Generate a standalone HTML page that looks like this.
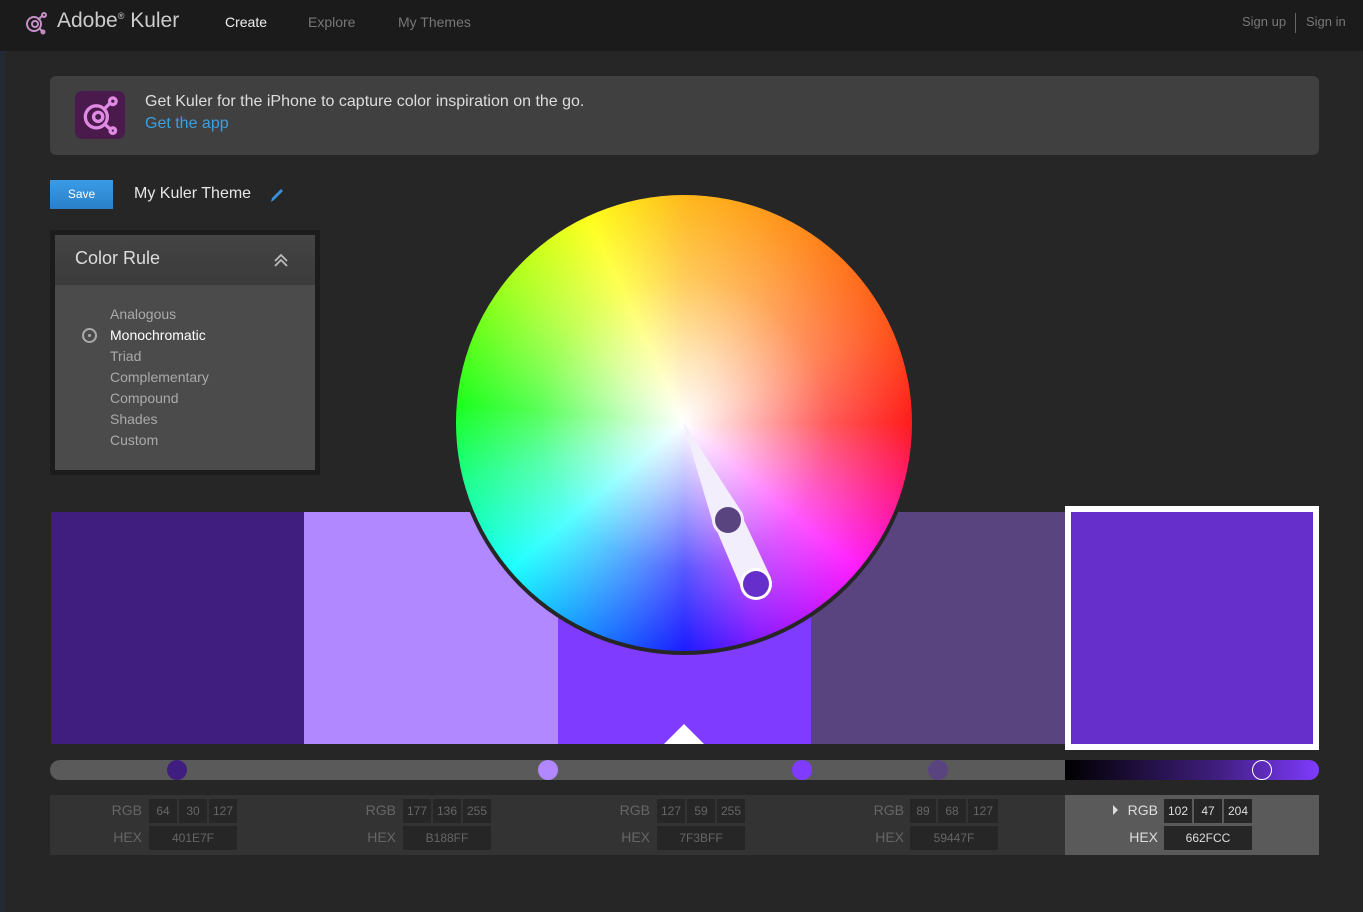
<!DOCTYPE html>
<html><head><meta charset="utf-8"><style>
*{margin:0;padding:0;box-sizing:border-box}
body{width:1363px;height:912px;background:#262626;font-family:"Liberation Sans",sans-serif;position:relative;overflow:hidden}
.a{position:absolute}
.nav{left:0;top:0;width:1363px;height:51px;background:#1b1b1b}
.t{color:#777;font-size:14px}
.cell{position:absolute;background:#262626;color:#666;font-size:12px;text-align:center;line-height:24px;height:24px;font-family:"Liberation Sans Narrow","Liberation Sans",sans-serif}
.lab{position:absolute;color:#666;font-size:14px;text-align:right;width:40px}
.rule{position:absolute;left:110px;color:#aaa;font-size:14px}
</style></head><body>
<div class="a" style="left:0;top:0;width:5px;height:912px;background:#222a35"></div>
<div class="a nav"></div>
<svg class="a" style="left:24px;top:11px" width="24" height="24" viewBox="0 0 24 24"><g fill="none" stroke="#c58fc8" stroke-width="2"><circle cx="10" cy="13" r="7"/><circle cx="11" cy="13" r="3"/><line x1="14" y1="9" x2="19" y2="4"/><circle cx="20" cy="4" r="2"/><line x1="15" y1="17" x2="19" y2="21"/><circle cx="19" cy="21" r="1.5"/></g></svg>
<div class="a" style="left:57px;top:9px;color:#ccc;font-size:21px">Adobe<sup style="font-size:9px">®</sup> Kuler</div>
<div class="a" style="left:225px;top:14px;color:#eee;font-size:14px">Create</div>
<div class="a t" style="left:308px;top:14px">Explore</div>
<div class="a t" style="left:398px;top:14px">My Themes</div>
<div class="a t" style="left:1242px;top:14px;font-size:13px">Sign up</div>
<div class="a" style="left:1295px;top:13px;width:1px;height:20px;background:#666"></div>
<div class="a t" style="left:1306px;top:14px;font-size:13px">Sign in</div>

<div class="a" style="left:50px;top:76px;width:1269px;height:79px;background:#404040;border-radius:6px"></div>
<div class="a" style="left:75px;top:91px;width:50px;height:48px;background:#4a1a4c;border-radius:7px"></div>
<svg class="a" style="left:78px;top:93px" width="44" height="44" viewBox="0 0 24 24"><g fill="none" stroke="#e08ae4" stroke-width="1.8"><circle cx="10" cy="13" r="6"/><circle cx="11" cy="13" r="2.5"/><line x1="14" y1="9" x2="18" y2="5"/><circle cx="19" cy="4.5" r="1.8"/><line x1="14.5" y1="17" x2="18" y2="20"/><circle cx="19" cy="20.5" r="1.5"/></g></svg>
<div class="a" style="left:145px;top:93px;color:#ddd;font-size:16px">Get Kuler for the iPhone to capture color inspiration on the go.</div>
<div class="a" style="left:145px;top:115px;color:#3d9ee0;font-size:16px">Get the app</div>

<div class="a" style="left:50px;top:180px;width:63px;height:29px;background:linear-gradient(#3a9be6,#2a7fc8);color:#fff;font-size:12px;text-align:center;line-height:29px">Save</div>
<div class="a" style="left:134px;top:185px;color:#e6e6e6;font-size:16px">My Kuler Theme</div>
<svg class="a" style="left:268px;top:186px" width="18" height="18"><path d="M3 16 L4 12 L13 3 L15 5 L6 14 Z" fill="#3a90d8"/></svg>

<div class="a" style="left:50px;top:230px;width:270px;height:245px;background:#1c1c1c"></div>
<div class="a" style="left:55px;top:235px;width:260px;height:50px;background:linear-gradient(#444,#3b3b3b)"></div>
<div class="a" style="left:55px;top:285px;width:260px;height:185px;background:#4b4b4b"></div>
<div class="a" style="left:75px;top:248px;color:#ddd;font-size:18px">Color Rule</div>
<svg class="a" style="left:273px;top:252px" width="16" height="16"><path d="M2 9 L8 3 L14 9 M2 14 L8 8 L14 14" fill="none" stroke="#bbb" stroke-width="1.8"/></svg>
<div class="rule" style="top:306px">Analogous</div>
<div class="rule" style="top:327px;color:#fff">Monochromatic</div>
<div class="rule" style="top:348px">Triad</div>
<div class="rule" style="top:369px">Complementary</div>
<div class="rule" style="top:390px">Compound</div>
<div class="rule" style="top:411px">Shades</div>
<div class="rule" style="top:432px">Custom</div>
<div class="a" style="left:82px;top:328px;width:15px;height:15px;border:2px solid #aaa;border-radius:50%"></div>
<div class="a" style="left:88px;top:334px;width:3px;height:3px;background:#aaa;border-radius:50%"></div>

<div class="a" style="left:51px;top:512px;width:253px;height:232px;background:#401E7F"></div>
<div class="a" style="left:304px;top:512px;width:254px;height:232px;background:#B188FF"></div>
<div class="a" style="left:558px;top:512px;width:253px;height:232px;background:#7F3BFF"></div>
<div class="a" style="left:811px;top:512px;width:254px;height:232px;background:#59447F"></div>
<div class="a" style="left:1065px;top:506px;width:254px;height:244px;background:#662FCC;border:6px solid #fff"></div>
<div class="a" style="left:664px;top:724px;width:0;height:0;border-left:20px solid transparent;border-right:20px solid transparent;border-bottom:20px solid #fff"></div>

<div class="a" style="left:452px;top:191px;width:464px;height:464px;border-radius:50%;background:#262626"></div>
<div class="a" style="left:456px;top:195px;width:456px;height:456px;border-radius:50%;background:conic-gradient(from 0deg,#ffb000,#ff8000 30deg,#ff4000 65deg,#ff0000 90deg,#ff00ff 130deg,#8000ff 160deg,#0000ff 180deg,#0080ff 205deg,#00ffff 230deg,#00ff80 255deg,#00ff00 275deg,#a0ff00 310deg,#ffff00 335deg,#ffb000)"></div>
<div class="a" style="left:456px;top:195px;width:456px;height:456px;border-radius:50%;background:radial-gradient(circle at 50% 50%,rgba(255,255,255,1) 0%,rgba(255,255,255,.75) 18%,rgba(255,255,255,.35) 45%,rgba(255,255,255,0) 82%)"></div>
<svg class="a" style="left:0;top:0" width="1363" height="912">
<polygon points="683,422 743,514 714,527" fill="#f3eefc"/>
<polygon points="714,524 741,514 771,578 742,590" fill="#f3eefc"/>
<circle cx="728" cy="520" r="16" fill="#f3eefc"/>
<circle cx="728" cy="520" r="13" fill="#59447F"/>
<circle cx="756" cy="584" r="16" fill="#fff"/>
<circle cx="756" cy="584" r="13" fill="#662FCC"/>
</svg>

<div class="a" style="left:50px;top:760px;width:1269px;height:20px;border-radius:10px;background:#5a5a5a;overflow:hidden"><div class="a" style="left:1015px;top:0;width:254px;height:20px;background:linear-gradient(90deg,#000,#401e7f 60%,#7F3BFF)"></div></div>
<div class="a" style="left:167px;top:760px;width:20px;height:20px;border-radius:50%;background:#401E7F"></div>
<div class="a" style="left:538px;top:760px;width:20px;height:20px;border-radius:50%;background:#B188FF"></div>
<div class="a" style="left:792px;top:760px;width:20px;height:20px;border-radius:50%;background:#7F3BFF"></div>
<div class="a" style="left:928px;top:760px;width:20px;height:20px;border-radius:50%;background:#59447F"></div>
<div class="a" style="left:1252px;top:760px;width:20px;height:20px;border-radius:50%;border:1.5px solid #fff"></div>

<div class="a" style="left:50px;top:795px;width:1015px;height:60px;background:#333"></div>
<div class="a" style="left:1065px;top:795px;width:254px;height:60px;background:#5a5a5a"></div>

<div class="lab" style="left:102px;top:802px">RGB</div><div class="lab" style="left:102px;top:829px">HEX</div>
<div class="cell" style="left:149px;top:799px;width:28px">64</div><div class="cell" style="left:179px;top:799px;width:28px">30</div><div class="cell" style="left:209px;top:799px;width:28px">127</div>
<div class="cell" style="left:149px;top:826px;width:88px">401E7F</div>

<div class="lab" style="left:356px;top:802px">RGB</div><div class="lab" style="left:356px;top:829px">HEX</div>
<div class="cell" style="left:403px;top:799px;width:28px">177</div><div class="cell" style="left:433px;top:799px;width:28px">136</div><div class="cell" style="left:463px;top:799px;width:28px">255</div>
<div class="cell" style="left:403px;top:826px;width:88px">B188FF</div>

<div class="lab" style="left:610px;top:802px">RGB</div><div class="lab" style="left:610px;top:829px">HEX</div>
<div class="cell" style="left:657px;top:799px;width:28px">127</div><div class="cell" style="left:687px;top:799px;width:28px">59</div><div class="cell" style="left:717px;top:799px;width:28px">255</div>
<div class="cell" style="left:657px;top:826px;width:88px">7F3BFF</div>

<div class="lab" style="left:864px;top:802px">RGB</div><div class="lab" style="left:864px;top:829px">HEX</div>
<div class="cell" style="left:910px;top:799px;width:26px">89</div><div class="cell" style="left:938px;top:799px;width:28px">68</div><div class="cell" style="left:968px;top:799px;width:30px">127</div>
<div class="cell" style="left:910px;top:826px;width:88px">59447F</div>

<div class="a" style="left:1113px;top:805px;width:0;height:0;border-top:5px solid transparent;border-bottom:5px solid transparent;border-left:5px solid #ddd"></div>
<div class="lab" style="left:1118px;top:802px;color:#ddd">RGB</div><div class="lab" style="left:1118px;top:829px;color:#ddd">HEX</div>
<div class="cell" style="left:1164px;top:799px;width:28px;color:#ddd">102</div><div class="cell" style="left:1194px;top:799px;width:28px;color:#ddd">47</div><div class="cell" style="left:1224px;top:799px;width:28px;color:#ddd">204</div>
<div class="cell" style="left:1164px;top:826px;width:88px;color:#ddd">662FCC</div>
</body></html>
